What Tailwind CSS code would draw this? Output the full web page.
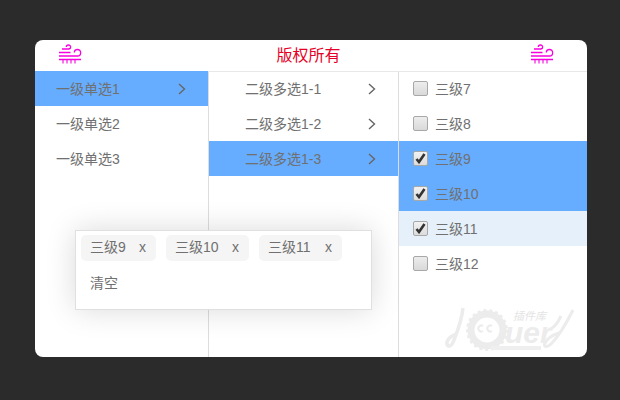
<!DOCTYPE html>
<html><head><meta charset="utf-8">
<script src="https://cdn.jsdelivr.net/npm/@tailwindcss/browser@4"></script>
<title>级联选择</title>
</head>
<body class="bg-[#2b2b2b] w-[620px] h-[400px] overflow-hidden font-['Liberation_Sans','Noto_Sans_CJK_SC',sans-serif] text-[14px] text-[#707070]">
  <div class="relative ml-[35px] mt-[40px] w-[552px] h-[317px] bg-white rounded-lg overflow-hidden float-left">
    <!-- header -->
    <div class="flex items-center justify-between h-[32px] pl-[23px] pr-[33px] border-b border-[#e8e8e8]">
      <svg class="w-[24px] h-[22px] mt-[-2px]" viewBox="0 0 24 22" fill="none" stroke="#f800e0" stroke-width="1.300">
        <path d="M1 8.500h11.500M1 12h18.500c4.200 0 4.200-6.500 0-6.500-2.200 0-3.200 1.500-3.200 3M1 15.500h22M4 5h6.500c2.800 0 2.800-4 0-4-1.500 0-2.200 1-2.200 2"/>
        <path d="M5 15.500v4M9 15.500v4M13 15.500v4M17 15.500v4" stroke-width="1.100"/>
      </svg>
      <span class="text-[16px] text-[#e60026] leading-none ml-[5px]">版权所有</span>
      <svg class="w-[24px] h-[22px] mt-[-2px]" viewBox="0 0 24 22" fill="none" stroke="#f800e0" stroke-width="1.300">
        <path d="M1 8.500h11.500M1 12h18.500c4.200 0 4.200-6.500 0-6.500-2.200 0-3.200 1.500-3.200 3M1 15.500h22M4 5h6.500c2.800 0 2.800-4 0-4-1.500 0-2.200 1-2.200 2"/>
        <path d="M5 15.500v4M9 15.500v4M13 15.500v4M17 15.500v4" stroke-width="1.100"/>
      </svg>
    </div>
    <div class="flex h-[285px]">
      <!-- level 1 -->
      <ul class="w-[174px] border-r border-[#ddd]">
        <li class="flex items-center justify-between h-[35px] pt-[2px] pl-[21px] pr-[22px] bg-[#66adff] mt-[-1px]">一级单选1
          <svg class="w-[8px] h-[12px] mt-[-2px]" viewBox="0 0 8 12" fill="none" stroke="#666" stroke-width="1.400"><path d="M1 1l5.500 5-5.500 5"/></svg>
        </li>
        <li class="flex items-center h-[35px] pt-[2px] pl-[21px]">一级单选2</li>
        <li class="flex items-center h-[35px] pt-[2px] pl-[21px]">一级单选3</li>
      </ul>
      <!-- level 2 -->
      <ul class="w-[190px] border-r border-[#ddd]">
        <li class="flex items-center justify-between h-[35px] pt-[2px] pl-[36px] pr-[22px] mt-[-1px]">二级多选1-1
          <svg class="w-[8px] h-[12px] mt-[-2px]" viewBox="0 0 8 12" fill="none" stroke="#666" stroke-width="1.400"><path d="M1 1l5.500 5-5.500 5"/></svg>
        </li>
        <li class="flex items-center justify-between h-[35px] pt-[2px] pl-[36px] pr-[22px]">二级多选1-2
          <svg class="w-[8px] h-[12px] mt-[-2px]" viewBox="0 0 8 12" fill="none" stroke="#666" stroke-width="1.400"><path d="M1 1l5.500 5-5.500 5"/></svg>
        </li>
        <li class="flex items-center justify-between h-[35px] pt-[2px] pl-[36px] pr-[22px] bg-[#66adff]">二级多选1-3
          <svg class="w-[8px] h-[12px] mt-[-2px]" viewBox="0 0 8 12" fill="none" stroke="#666" stroke-width="1.400"><path d="M1 1l5.500 5-5.500 5"/></svg>
        </li>
      </ul>
      <!-- level 3 -->
      <ul class="flex-1">
        <li class="flex items-center gap-[7px] h-[35px] pl-[14px] mt-[-1px]">
          <span class="w-[15px] h-[15px] rounded-[2px] border border-[#a8a8a8] bg-gradient-to-b from-[#ededed] to-[#d9d9d9]"></span><span class="mt-[2px]">三级7</span></li>
        <li class="flex items-center gap-[7px] h-[35px] pl-[14px]">
          <span class="w-[15px] h-[15px] rounded-[2px] border border-[#a8a8a8] bg-gradient-to-b from-[#ededed] to-[#d9d9d9]"></span><span class="mt-[2px]">三级8</span></li>
        <li class="flex items-center gap-[7px] h-[35px] pl-[14px] bg-[#66adff]">
          <span class="flex items-center justify-center w-[15px] h-[15px] rounded-[2px] border border-[#a8a8a8] bg-gradient-to-b from-[#f2f2f2] to-[#dcdcdc]"><svg class="w-[11px] h-[11px]" viewBox="0 0 11 11" fill="none" stroke="#333" stroke-width="2.600"><path d="M1.500 6l2.500 3 5.500-8"/></svg></span><span class="mt-[2px]">三级9</span></li>
        <li class="flex items-center gap-[7px] h-[35px] pl-[14px] bg-[#66adff]">
          <span class="flex items-center justify-center w-[15px] h-[15px] rounded-[2px] border border-[#a8a8a8] bg-gradient-to-b from-[#f2f2f2] to-[#dcdcdc]"><svg class="w-[11px] h-[11px]" viewBox="0 0 11 11" fill="none" stroke="#333" stroke-width="2.600"><path d="M1.500 6l2.500 3 5.500-8"/></svg></span><span class="mt-[2px]">三级10</span></li>
        <li class="flex items-center gap-[7px] h-[35px] pl-[14px] bg-[#e6f0fa]">
          <span class="flex items-center justify-center w-[15px] h-[15px] rounded-[2px] border border-[#a8a8a8] bg-gradient-to-b from-[#f2f2f2] to-[#dcdcdc]"><svg class="w-[11px] h-[11px]" viewBox="0 0 11 11" fill="none" stroke="#333" stroke-width="2.600"><path d="M1.500 6l2.500 3 5.500-8"/></svg></span><span class="mt-[2px]">三级11</span></li>
        <li class="flex items-center gap-[7px] h-[35px] pl-[14px]">
          <span class="w-[15px] h-[15px] rounded-[2px] border border-[#a8a8a8] bg-gradient-to-b from-[#ededed] to-[#d9d9d9]"></span><span class="mt-[2px]">三级12</span></li>
      </ul>
    </div>
    <!-- selected popup -->
    <div class="absolute left-[40px] top-[190px] w-[297px] h-[80px] bg-white border border-[#e0e0e0] shadow-[0_0_30px_rgba(0,0,0,0.15)] pl-[5px] pt-[4px]">
      <div class="flex gap-[10px]">
        <span class="flex items-center justify-between w-[75px] h-[26px] pl-[9px] pr-[10px] pb-[1px] bg-[#f5f5f5] rounded-[5px]">三级9<span>x</span></span>
        <span class="flex items-center justify-between w-[83px] h-[26px] pl-[9px] pr-[10px] pb-[1px] bg-[#f5f5f5] rounded-[5px]">三级10<span>x</span></span>
        <span class="flex items-center justify-between w-[83px] h-[26px] pl-[9px] pr-[10px] pb-[1px] bg-[#f5f5f5] rounded-[5px]">三级11<span>x</span></span>
      </div>
      <div class="pl-[9px] mt-[12px]">清空</div>
    </div>
    <!-- watermark -->
    <svg class="absolute left-[410px] top-[262px] w-[135px] h-[55px]" viewBox="0 0 135 55" fill="none">
      <path d="M18 6c-1 10-5 22-9 32-2 6-6 8-7 4s4-8 9-10" stroke="#ececec" stroke-width="3.500"/>
      <circle cx="42" cy="28" r="16" stroke="#ececec" stroke-width="7"/>
      <circle cx="42" cy="28" r="20" stroke="#ececec" stroke-width="2" stroke-dasharray="3 3"/>
      <path d="M38 24a3 3 0 1 0 0 5M47 24a3 3 0 1 0 0 5" stroke="#ececec" stroke-width="2"/>
      <text x="60" y="41" font-family="Liberation Sans" font-size="30" font-weight="700" font-style="italic" fill="#ececec">uer</text>
      <path d="M128 8c-6 12-14 26-22 34-4 4-8 3-6-1s8-8 14-10M116 14c-3 6-5 10-9 12" stroke="#ececec" stroke-width="3"/>
      <text x="68" y="18" font-family="Noto Sans CJK SC" font-size="11" font-style="italic" fill="#e4e4e4">插件库</text>
      <rect x="46" y="44" width="50" height="4" fill="#efefef"/>
    </svg>
  </div>
</body></html>
